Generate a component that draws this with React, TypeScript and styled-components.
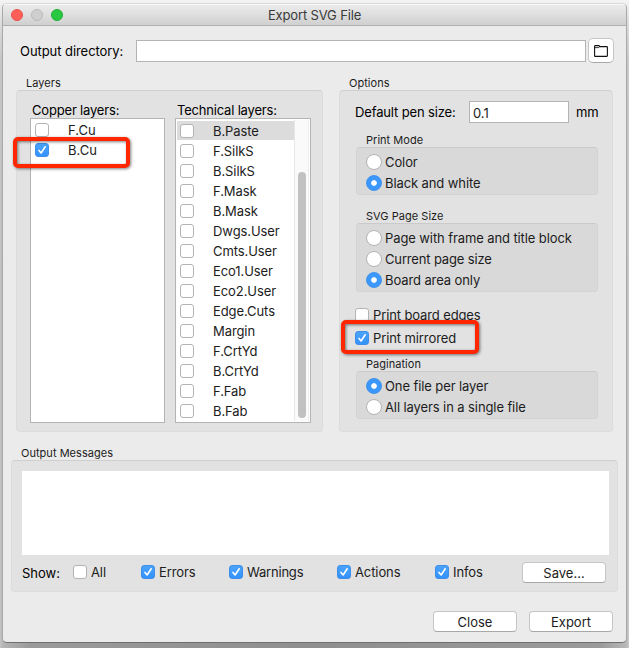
import React from "react";
import styled, { createGlobalStyle, css } from "styled-components";

const GlobalStyle = createGlobalStyle`
  * { box-sizing: border-box; }
  html, body { margin: 0; height: 100%; overflow: hidden; }
  body {
    background: linear-gradient(90deg, #c4c4c4 0, #b4b4b4 3px, #9a9a9a 30px, #8f8f8f 50%, #9a9a9a 600px, #b9b9b9 627px, #cfcfcf 100%);
    font-family: Inter, "Liberation Sans", sans-serif;
    font-size: 13px;
    color: #1c1c1c;
  }
`;

const Desktop = styled.div`
  height: 648px;
  padding: 3px 2px 5px;
  background: linear-gradient(180deg, #f4f4f4 0, #efefef 4px, rgba(225, 225, 225, 0.8) 24px, rgba(205, 205, 205, 0.5) 60px, rgba(190, 190, 190, 0) 300px);
`;

const Window = styled.main`
  width: 625px;
  height: 640px;
  display: flex;
  flex-direction: column;
  background: #ebebeb;
  border: 1px solid #a9a9a9;
  border-top-color: #d9d9d9;
  border-bottom-color: #6f6f6f;
  border-radius: 5px;
  overflow: hidden;
`;

const TitleBar = styled.header`
  height: 22px;
  flex: none;
  display: grid;
  grid-template-columns: 100px 1fr 100px;
  align-items: center;
  background: linear-gradient(#ebebeb, #d0d0d0);
  border-top: 1px solid #f7f7f7;
  border-bottom: 1px solid #b0b0b0;
`;

const TrafficLights = styled.div`
  display: flex;
  gap: 8px;
  padding-left: 8px;
`;

const Light = styled.span<{ $fill: string; $edge: string }>`
  width: 12px;
  height: 12px;
  border-radius: 50%;
  background: ${(p) => p.$fill};
  border: 1px solid ${(p) => p.$edge};
`;

const Title = styled.h1`
  margin: 0;
  font-size: 13px;
  font-weight: 400;
  line-height: 18px;
  text-align: center;
  letter-spacing: -0.15px;
  color: #3a3a3a;
`;

const DirectoryRow = styled.div`
  height: 25px;
  margin: 12px 12px 0 17px;
  display: flex;
  align-items: center;
`;

const Text = styled.span<{ $track?: number; $dark?: boolean }>`
  white-space: nowrap;
  line-height: 16px;
  letter-spacing: ${(p) => p.$track ?? 0}px;
  ${(p) => p.$dark && css`color: #000;`}
`;

const DirectoryLabel = styled(Text)`
  width: 116px;
`;

const Field = styled.input`
  height: 22px;
  width: ${(p) => p.width}px;
  padding: 2px 4px 0 3px;
  font: inherit;
  color: #1c1c1c;
  background: #fff;
  border: 1px solid #b4b4b4;
  border-radius: 0;
  outline: none;
`;

const buttonFace = css`
  display: flex;
  align-items: center;
  justify-content: center;
  padding: 0;
  font: inherit;
  color: #1c1c1c;
  background: #fff;
  border: 1px solid #c6c6c6;
  border-bottom-color: #a8a8a8;
  border-radius: 4px;
`;

const BrowseButton = styled.button`
  ${buttonFace}
  width: 26px;
  height: 25px;
  margin-left: 2px;
  border-radius: 5px;
`;

const PushButton = styled.button`
  ${buttonFace}
  width: 84px;
  height: 21px;
`;

const Columns = styled.div`
  margin: 13px 12px 0 13px;
  display: grid;
  grid-template-columns: 307px 274px;
  column-gap: 16px;
`;

const Caption = styled.div<{ $indent: number; $track?: number }>`
  height: 14px;
  padding-left: ${(p) => p.$indent}px;
  font-size: 11px;
  line-height: 14px;
  letter-spacing: ${(p) => p.$track ?? 0.03}px;
`;

const Panel = styled.section<{ $height: number }>`
  height: ${(p) => p.$height}px;
  background: #e2e2e2;
  border: 1px solid #dcdcdc;
  border-top-color: #cfcfcf;
  border-radius: 4px;
`;

const LayersPanel = styled(Panel)`
  display: grid;
  grid-template-columns: 135px 136px;
  column-gap: 10px;
  padding: 11px 0 0 13px;
`;

const ListLabel = styled(Text)`
  display: block;
  height: 16px;
  padding-left: 2px;
`;

const List = styled.div`
  height: 305px;
  display: flex;
  background: #fff;
  border: 1px solid #b4b4b4;
`;

const Rows = styled.ul<{ $top: number }>`
  flex: 1;
  margin: 0;
  padding: ${(p) => p.$top}px 0 0 1px;
  list-style: none;
`;

const ListRow = styled.li<{ $selected?: boolean }>`
  height: 20px;
  padding: 0 0 0 3px;
  display: flex;
  align-items: center;
  gap: 19px;
  background: ${(p) => (p.$selected ? "linear-gradient(#dcdcdc, #dcdcdc) 0 0 / 100% 19px no-repeat" : "none")};
`;

const ScrollTrack = styled.div`
  width: 15px;
  margin: 1px 1px 1px 0;
  padding: 52px 0 0 3px;
  background: #fafafa;
  border-left: 1px solid #e8e8e8;
  border-right: 1px solid #ededed;
`;

const ScrollThumb = styled.div`
  width: 8px;
  height: 246px;
  border-radius: 4px;
  background: #c1c1c1;
`;

const Box = styled.span<{ $on?: boolean }>`
  width: 14px;
  height: 14px;
  flex: none;
  display: flex;
  border-radius: 3px;
  background: ${(p) => (p.$on ? "linear-gradient(#4aa3fb, #3492fc)" : "#fff")};
  border: ${(p) => (p.$on ? "1px solid #3f8eea" : "1px solid #b3b3b3")};
`;

const OptionsPanel = styled(Panel)`
  padding: 10px 14px 0 15px;
`;

const PenRow = styled.div`
  height: 22px;
  display: grid;
  grid-template-columns: 114px 100px auto;
  align-items: center;
`;

const UnitLabel = styled(Text)`
  padding-left: 7px;
`;

const OptionGroup = styled.div<{ $gap: number }>`
  margin-top: ${(p) => p.$gap}px;
  padding-left: 1px;
`;

const RadioPanel = styled.div<{ $rows: number }>`
  width: 242px;
  height: ${(p) => p.$rows * 21 + 6}px;
  padding: 3px 0 0 9px;
  background: #d9d9d9;
  border: 1px solid #d3d3d3;
  border-top-color: #cacaca;
  border-radius: 4px;
`;

const ChoiceRow = styled.div<{ $height: number; $gap: number }>`
  height: ${(p) => p.$height}px;
  display: flex;
  align-items: center;
  gap: ${(p) => p.$gap}px;
`;

const RadioDot = styled.span<{ $on?: boolean }>`
  width: 16px;
  height: 16px;
  flex: none;
  border-radius: 50%;
  border: 1px solid ${(p) => (p.$on ? "#3f92ef" : "#b3b3b3")};
  background: ${(p) => (p.$on ? "radial-gradient(circle, #fff 2.4px, #3b97fc 3.2px)" : "#fff")};
`;

const CheckGroup = styled.div`
  margin: 11px 0 8px;
`;

const Messages = styled.div`
  margin: 14px 8px 0 8px;
`;

const MessagesPanel = styled(Panel)`
  padding: 10px 8px 0 10px;
`;

const MessageLog = styled.div`
  height: 84px;
  background: #fff;
`;

const FilterRow = styled.div`
  height: 21px;
  margin: 7px 3px 0 0;
  display: grid;
  grid-template-columns: 51px 68px 88px 108px 98px 87px 84px;
  align-items: start;
`;

const ShowLabel = styled(Text)`
  padding-top: 3px;
`;

const ActionRow = styled.footer`
  margin: 19px 13px 0 0;
  display: flex;
  justify-content: flex-end;
  gap: 12px;
`;

const Highlight = styled.div<{ $x: number; $y: number; $w: number; $h: number }>`
  position: absolute;
  left: ${(p) => p.$x}px;
  top: ${(p) => p.$y}px;
  width: ${(p) => p.$w}px;
  height: ${(p) => p.$h}px;
  border: 4px solid #ff2600;
  border-radius: 5px;
  filter: drop-shadow(1px 1px 1.5px rgba(0, 0, 0, 0.5));
  pointer-events: none;
`;

const CheckMark = () => (
  <svg width="12" height="12" viewBox="0 0 12 12" fill="none" stroke="#fff" strokeWidth="1.6" strokeLinecap="round" strokeLinejoin="round">
    <path d="M3 6.4 5.1 9 9.2 2.8" />
  </svg>
);

const FolderIcon = () => (
  <svg width="14" height="12" viewBox="0 0 14 12" fill="none" stroke="#111" strokeWidth="1.1" strokeLinejoin="round">
    <path d="M.6 10.8V1.4Q.6.6 1.4.6H4.6Q5.3.6 5.6 1.6H12.7Q13.4 1.6 13.4 2.3V10.8Q13.4 11.4 12.8 11.4H1.2Q.6 11.4.6 10.8Z" />
    <path d="M.6 2.6H4.8L5.6 1.6" strokeWidth="0.8" />
  </svg>
);

const Checkbox = ({ on }: { on?: boolean }) => <Box $on={on}>{on && <CheckMark />}</Box>;

type CheckItem = { label: string; on?: boolean; track?: number };

const CheckOption = ({ item, height, gap = 4 }: { item: CheckItem; height: number; gap?: number }) => (
  <ChoiceRow $height={height} $gap={gap}>
    <Checkbox on={item.on} />
    <Text $track={item.track ?? -0.1}>{item.label}</Text>
  </ChoiceRow>
);

const RadioGroup = ({ title, gap, items }: { title: string; gap: number; items: CheckItem[] }) => (
  <OptionGroup $gap={gap}>
    <Caption $indent={10}>{title}</Caption>
    <RadioPanel $rows={items.length}>
      {items.map((item) => (
        <ChoiceRow key={item.label} $height={21} $gap={3}>
          <RadioDot $on={item.on} />
          <Text $track={item.track ?? -0.1}>{item.label}</Text>
        </ChoiceRow>
      ))}
    </RadioPanel>
  </OptionGroup>
);

const copperLayers: CheckItem[] = [{ label: "F.Cu" }, { label: "B.Cu", on: true }];

const technicalLayers = [
  "B.Paste", "F.SilkS", "B.SilkS", "F.Mask", "B.Mask", "Dwgs.User", "Cmts.User", "Eco1.User",
  "Eco2.User", "Edge.Cuts", "Margin", "F.CrtYd", "B.CrtYd", "F.Fab", "B.Fab",
];

const messageFilters: CheckItem[] = [
  { label: "All" },
  { label: "Errors", on: true },
  { label: "Warnings", on: true, track: -0.2 },
  { label: "Actions", on: true },
  { label: "Infos", on: true },
];

export default function App() {
  return (
    <>
      <GlobalStyle />
      <Desktop>
        <Window>
          <TitleBar>
            <TrafficLights>
              <Light $fill="#ff5f57" $edge="#e9524a" />
              <Light $fill="#cfcfcf" $edge="#b9b9b9" />
              <Light $fill="#28c940" $edge="#1fae34" />
            </TrafficLights>
            <Title>Export SVG File</Title>
          </TitleBar>

          <DirectoryRow>
            <DirectoryLabel $dark $track={-0.06}>Output directory:</DirectoryLabel>
            <Field width={450} aria-label="Output directory" />
            <BrowseButton aria-label="Browse"><FolderIcon /></BrowseButton>
          </DirectoryRow>

          <Columns>
            <div>
              <Caption $indent={10}>Layers</Caption>
              <LayersPanel $height={342}>
                <div>
                  <ListLabel $dark $track={-0.18}>Copper layers:</ListLabel>
                  <List>
                    <Rows $top={1}>
                      {copperLayers.map((layer) => (
                        <ListRow key={layer.label}>
                          <Checkbox on={layer.on} />
                          <Text>{layer.label}</Text>
                        </ListRow>
                      ))}
                    </Rows>
                  </List>
                </div>
                <div>
                  <ListLabel $dark $track={-0.19}>Technical layers:</ListLabel>
                  <List>
                    <Rows $top={2}>
                      {technicalLayers.map((layer, i) => (
                        <ListRow key={layer} $selected={i === 0}>
                          <Checkbox />
                          <Text $track={-0.08}>{layer}</Text>
                        </ListRow>
                      ))}
                    </Rows>
                    <ScrollTrack><ScrollThumb /></ScrollTrack>
                  </List>
                </div>
              </LayersPanel>
            </div>

            <div>
              <Caption $indent={10}>Options</Caption>
              <OptionsPanel $height={342}>
                <PenRow>
                  <Text $dark $track={-0.14}>Default pen size:</Text>
                  <Field width={100} defaultValue="0.1" aria-label="Default pen size" />
                  <UnitLabel $dark $track={-0.2}>mm</UnitLabel>
                </PenRow>
                <RadioGroup title="Print Mode" gap={10} items={[{ label: "Color" }, { label: "Black and white", on: true }]} />
                <RadioGroup
                  title="SVG Page Size"
                  gap={14}
                  items={[{ label: "Page with frame and title block" }, { label: "Current page size", track: -0.15 }, { label: "Board area only", on: true }]}
                />
                <CheckGroup>
                  <CheckOption item={{ label: "Print board edges", track: -0.12 }} height={23} />
                  <CheckOption item={{ label: "Print mirrored", on: true }} height={23} />
                </CheckGroup>
                <RadioGroup title="Pagination" gap={0} items={[{ label: "One file per layer", on: true }, { label: "All layers in a single file" }]} />
              </OptionsPanel>
            </div>
          </Columns>

          <Messages>
            <Caption $indent={10}>Output Messages</Caption>
            <MessagesPanel $height={132}>
              <MessageLog />
              <FilterRow>
                <ShowLabel $dark>Show:</ShowLabel>
                {messageFilters.map((item) => (
                  <CheckOption key={item.label} item={item} height={20} />
                ))}
                <PushButton>Save...</PushButton>
              </FilterRow>
            </MessagesPanel>
          </Messages>

          <ActionRow>
            <PushButton>Close</PushButton>
            <PushButton>Export</PushButton>
          </ActionRow>
        </Window>
      </Desktop>
      <Highlight $x={13} $y={137} $w={117} $h={31} />
      <Highlight $x={341} $y={320} $w={138} $h={34} />
    </>
  );
}
